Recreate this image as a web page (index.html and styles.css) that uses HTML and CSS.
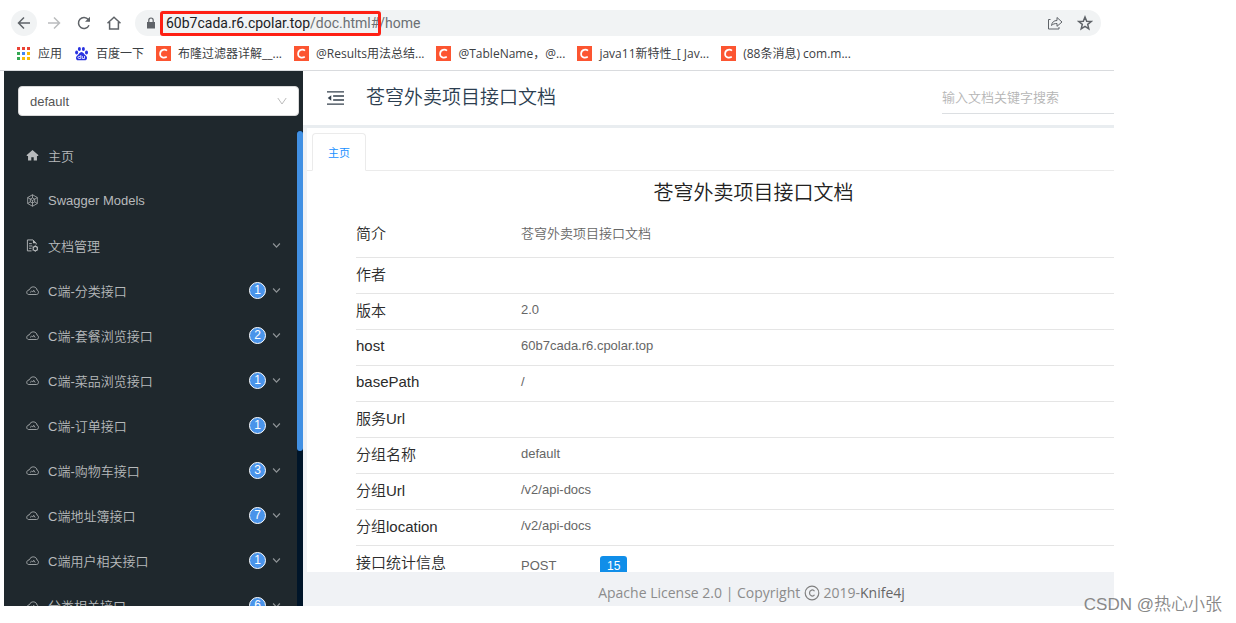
FILE: index.html
```
<!DOCTYPE html>
<html lang="zh-CN">
<head>
    <meta charset="UTF-8">
    <meta name="viewport" content="width=device-width, initial-scale=1.0">
    <title>苍穹外卖项目接口文档</title>
    <link rel="stylesheet" href="styles.css">
</head>
<body>
    <svg class="sprite" aria-hidden="true">
        <symbol id="down" viewBox="0 0 8 8"><path d="M1 2.2l3 3.2 3-3.2" fill="none" stroke="currentColor" stroke-width="1.1"/></symbol>
        <symbol id="cloud" viewBox="0 0 14 14">
            <path d="M2.800 11.300H11.300c2.700-.1 2.700-4.200.6-4.700C11.500 2.300 5 1.700 3.700 6.200.3 6.400-.2 11 2.800 11.300z" fill="none" stroke="currentColor" stroke-width=".9"/>
            <path d="M4.300 9.200l1.800-1.700 1.200 1.200 1-2 1.600 2.500" fill="none" stroke="currentColor" stroke-width=".8"/>
        </symbol>
        <symbol id="csdn" viewBox="0 0 15 15">
            <path d="M0 0h15v15H0z" fill="#fc5531"/>
            <path d="M11 4.600C9.400 3.300 4.400 2.800 4.100 7.600c-.2 4.400 4.200 4.500 6.700 3.100" fill="none" stroke="#fff" stroke-width="1.700"/>
        </symbol>
    </svg>

    <div class="browser">
        <header class="toolbar">
            <button class="nav-btn active" aria-label="后退"><svg viewBox="0 0 16 16"><path d="M14 8H2.500M8 2.500L2.500 8 8 13.500"/></svg></button>
            <button class="nav-btn disabled" aria-label="前进"><svg viewBox="0 0 16 16"><path d="M2 8h11.500M8 2.500L13.500 8 8 13.500"/></svg></button>
            <button class="nav-btn" aria-label="刷新"><svg viewBox="0 0 16 16"><path d="M13 10.200A5.500 5.500 0 1 1 12.300 4.500L13.400 6"/><path d="M14 1.800V6.800H9z" fill="#5f6368" stroke="none"/></svg></button>
            <button class="nav-btn" aria-label="主页"><svg viewBox="0 0 16 16"><path d="M1.500 8.300L8 2.300l6.500 6M3.600 7v7h8.800V7"/></svg></button>
            <div class="address">
                <svg class="lock" viewBox="0 0 10 12"><path d="M1 5h8v6.500H1z" fill="#5f6368"/><path d="M2.800 5V3.200a2.200 2.200 0 0 1 4.400 0V5" fill="none" stroke="#5f6368" stroke-width="1.200"/></svg>
                <span class="url"><b>60b7cada.r6.cpolar.top</b>/doc.html#/home</span>
                <button class="addr-btn share" aria-label="分享"><svg viewBox="0 0 16 16"><path d="M3.500 4.500H1.500v9.500h10.500V12M4.500 10.500c.5-3.500 2.500-5 5.500-5V2.500L15 7l-5 4.300V8.500c-2.500 0-4 .5-5.500 2z"/></svg></button>
                <button class="addr-btn" aria-label="收藏"><svg viewBox="0 0 16 16"><path d="M8 2l1.700 4.200 4.500.3-3.500 2.900 1.100 4.400L8 11.400l-3.800 2.400 1.100-4.400L1.800 6.500l4.500-.3z" stroke-width="1.500"/></svg></button>
                <span class="mark"></span>
            </div>
        </header>

        <nav class="bookmarks">
            <a href="#"><svg viewBox="0 0 15 15"><path d="M1 1h3v3H1zM6 1h3v3H6zM11 1h3v3h-3z" fill="#ea4335"/><path d="M1 6h3v3H1zM1 11h3v3H1z" fill="#34a853"/><path d="M6 6h3v3H6z" fill="#4285f4"/><path d="M11 6h3v3h-3zM6 11h3v3H6zM11 11h3v3h-3z" fill="#fbbc05"/></svg>应用</a>
            <a href="#"><svg viewBox="0 0 15 15" fill="#2932e1"><ellipse cx="2.600" cy="6.600" rx="1.500" ry="2"/><ellipse cx="5.400" cy="3" rx="1.500" ry="2"/><ellipse cx="9.400" cy="3" rx="1.500" ry="2"/><ellipse cx="12.500" cy="6.600" rx="1.500" ry="2"/><path d="M7.500 6C5.500 6 5 8.300 3.300 9.400 1 11.200 2 14.500 4.500 14.300h6c2.600.1 3.500-3 1.200-4.900C10 8.300 9.500 6 7.500 6z"/><path d="M6.800 9v3.500H5c-1.400 0-1.400-2.100 0-2.100h1.500M8.300 10v2.500h2.200V10" fill="none" stroke="#fff" stroke-width=".8"/></svg>百度一下</a>
            <a href="#"><svg><use href="#csdn"/></svg>布隆过滤器详解__...</a>
            <a href="#"><svg><use href="#csdn"/></svg>@Results用法总结...</a>
            <a href="#"><svg><use href="#csdn"/></svg>@TableName，@...</a>
            <a href="#"><svg><use href="#csdn"/></svg>java11新特性_[ Jav...</a>
            <a href="#"><svg><use href="#csdn"/></svg>(88条消息) com.m...</a>
        </nav>

        <div class="app">
            <aside class="sidebar">
                <div class="group">
                    <select aria-label="分组">
                        <option>default</option>
                    </select>
                    <svg viewBox="0 0 10 8"><path d="M.8 1L5 7l4.200-6" fill="none" stroke="#bbb"/></svg>
                </div>
                <div class="menu-wrap">
                    <ul class="menu">
                        <li><a href="#"><svg class="icon" viewBox="0 0 14 14"><path d="M7 1.200L.8 6.500v1h1.400v5h3.500V9h2.600v3.500h3.500v-5h1.400v-1z" fill="currentColor"/></svg>主页</a></li>
                        <li><a href="#"><svg class="icon" viewBox="0 0 14 14"><path d="M7 .8l5.200 3v6.400L7 13.200l-5.200-3V3.800zM7 .8v3.400M1.800 3.800l2.800 1.700M12.200 3.800L9.400 5.500M7 13.200V9.800M1.800 10.200l2.800-1.700M12.200 10.200L9.400 8.500M7 4.200l2.400 1.300v3L7 9.800 4.600 8.500v-3zM4.600 5.500L7 7l2.400-1.500M7 7v2.800" fill="none" stroke="currentColor" stroke-width=".8"/></svg>Swagger Models</a></li>
                        <li><a href="#"><svg class="icon" viewBox="0 0 14 14"><path d="M6 12.800H1.500V1h6L11 4.500V6M3.300 5h3M3.300 7.500h3.500M3.300 10H6" fill="none" stroke="currentColor"/><path d="M7.500 1v3.500H11z" fill="currentColor"/><circle cx="10" cy="10.300" r="2.300" fill="none" stroke="currentColor" stroke-width="1.200"/><path d="M10 6.800v1.200M10 12.600v1.200M7 8.600l1 .6M12 11.400l1 .6M13 8.600l-1 .6M8 11.400l-1 .6" stroke="currentColor"/></svg>文档管理</a><svg class="arrow"><use href="#down"/></svg></li>
                        <li><a href="#"><svg class="icon"><use href="#cloud"/></svg>C端-分类接口</a><span class="badge">1</span><svg class="arrow"><use href="#down"/></svg></li>
                        <li><a href="#"><svg class="icon"><use href="#cloud"/></svg>C端-套餐浏览接口</a><span class="badge">2</span><svg class="arrow"><use href="#down"/></svg></li>
                        <li><a href="#"><svg class="icon"><use href="#cloud"/></svg>C端-菜品浏览接口</a><span class="badge">1</span><svg class="arrow"><use href="#down"/></svg></li>
                        <li><a href="#"><svg class="icon"><use href="#cloud"/></svg>C端-订单接口</a><span class="badge">1</span><svg class="arrow"><use href="#down"/></svg></li>
                        <li><a href="#"><svg class="icon"><use href="#cloud"/></svg>C端-购物车接口</a><span class="badge">3</span><svg class="arrow"><use href="#down"/></svg></li>
                        <li><a href="#"><svg class="icon"><use href="#cloud"/></svg>C端地址簿接口</a><span class="badge">7</span><svg class="arrow"><use href="#down"/></svg></li>
                        <li><a href="#"><svg class="icon"><use href="#cloud"/></svg>C端用户相关接口</a><span class="badge">1</span><svg class="arrow"><use href="#down"/></svg></li>
                        <li><a href="#"><svg class="icon"><use href="#cloud"/></svg>分类相关接口</a><span class="badge">6</span><svg class="arrow"><use href="#down"/></svg></li>
                    </ul>
                    <div class="scrollbar"><div class="thumb"></div></div>
                </div>
            </aside>

            <main class="main">
                <div class="top">
                    <button class="fold" aria-label="收起菜单"><svg viewBox="0 0 18 16"><path d="M0 1.500h18M6.500 5.800H18M6.500 10.200H18M0 14.500h18" stroke="currentColor" stroke-width="1.500"/><path d="M4.500 5v6L.8 8z" fill="currentColor"/></svg></button>
                    <h1>苍穹外卖项目接口文档</h1>
                    <input class="search" type="text" placeholder="输入文档关键字搜索" aria-label="输入文档关键字搜索">
                </div>
                <div class="content">
                    <div class="tabs"><button class="tab">主页</button></div>
                    <h2>苍穹外卖项目接口文档</h2>
                    <table class="info">
                        <tr><th>简介</th><td>苍穹外卖项目接口文档</td></tr>
                        <tr><th>作者</th><td></td></tr>
                        <tr><th>版本</th><td>2.0</td></tr>
                        <tr><th>host</th><td>60b7cada.r6.cpolar.top</td></tr>
                        <tr><th>basePath</th><td>/</td></tr>
                        <tr><th>服务Url</th><td></td></tr>
                        <tr><th>分组名称</th><td>default</td></tr>
                        <tr><th>分组Url</th><td>/v2/api-docs</td></tr>
                        <tr><th>分组location</th><td>/v2/api-docs</td></tr>
                        <tr><th>接口统计信息</th><td><div class="stat"><span>POST</span><span class="tag">15</span></div></td></tr>
                    </table>
                </div>
                <footer class="footer">
                    Apache License 2.0 | Copyright
                    <svg viewBox="0 0 16 16"><circle cx="8" cy="8" r="6.800"/><path d="M10.500 6.200C9.300 4.300 5.500 4.500 5.500 8s3.800 3.700 5 1.800"/></svg>
                    2019-<a href="#">Knife4j</a>
                </footer>
            </main>
        </div>
    </div>
    <div class="watermark">CSDN @热心小张</div>
</body>
</html>
```
FILE: styles.css
```
* {
    box-sizing: border-box;
}

body {
    margin: 0;
    background: #fff;
    font-family: "Liberation Sans", "Noto Sans CJK SC", sans-serif;
    font-size: 13px;
    color: #333;
}

button {
    padding: 0;
    border: none;
    background: none;
    font: inherit;
}

a {
    color: inherit;
    text-decoration: none;
}

.sprite {
    display: none;
}

.browser {
    display: flex;
    flex-direction: column;
    height: 100vh;
    padding-bottom: 17px;
    margin-right: 122px;
}

/* browser toolbar */
.toolbar {
    display: flex;
    align-items: center;
    gap: 4px;
    padding: 10px 13px 0 11px;
}

.nav-btn {
    display: flex;
    align-items: center;
    justify-content: center;
    width: 26px;
    height: 26px;
    border-radius: 50%;
}

.nav-btn.active {
    background: #f1f3f4;
}

.nav-btn svg,
.addr-btn svg {
    display: block;
    width: 16px;
    height: 16px;
    fill: none;
    stroke: #5f6368;
    stroke-width: 1.5;
}

.nav-btn.disabled svg {
    stroke: #babcbe;
}

.address {
    position: relative;
    display: flex;
    flex: 1;
    align-items: center;
    height: 26px;
    margin-left: 4px;
    padding: 0 8px 0 11px;
    border-radius: 13px;
    background: #f1f3f4;
}

.lock {
    width: 10px;
    height: 12px;
}

.url {
    flex: 1;
    margin-left: 10px;
    font-family: Roboto, sans-serif;
    font-size: 14px;
    color: #6b6f73;
}

.url b {
    font-weight: normal;
    color: #202124;
}

.addr-btn {
    margin-left: 14px;
}

.addr-btn.share svg {
    stroke-width: 1;
}

/* red frame around the public address */
.mark {
    position: absolute;
    left: 25px;
    top: 1px;
    width: 221px;
    height: 25px;
    border: 3px solid #fe2014;
    border-radius: 3px;
}

.bookmarks {
    display: flex;
    align-items: center;
    gap: 12px;
    height: 35px;
    padding-left: 16px;
    border-bottom: 1px solid #d9dbde;
    font-family: "Open Sans", "Noto Sans CJK SC", sans-serif;
    font-size: 12px;
    color: #3c4043;
    white-space: nowrap;
}

.bookmarks a {
    display: flex;
    align-items: center;
    gap: 7px;
}

.bookmarks svg {
    width: 15px;
    height: 15px;
}

.app {
    display: flex;
    flex: 1;
    min-height: 0;
    margin-left: 4px;
    overflow: hidden;
}

/* sidebar */
.sidebar {
    display: flex;
    flex-direction: column;
    width: 299px;
    background: #1f282d;
    color: #b7babc;
}

.group {
    position: relative;
    padding: 15px 4px 15px 14px;
}

.group select {
    display: block;
    width: 100%;
    height: 30px;
    padding: 0 11px;
    border: 1px solid #d9d9d9;
    border-radius: 4px;
    background: #fff;
    font: inherit;
    color: #555;
    appearance: none;
}

.group svg {
    position: absolute;
    right: 16px;
    top: 26px;
    width: 10px;
    height: 8px;
}

.menu-wrap {
    display: flex;
    flex: 1;
    min-height: 0;
    overflow: hidden;
}

.menu {
    flex: 1;
    margin: 0;
    padding: 2px 16px 0 22px;
    list-style: none;
    font-weight: 350;
}

.menu li {
    display: flex;
    align-items: center;
    height: 45px;
}

.menu a {
    display: flex;
    flex: 1;
    align-items: center;
    gap: 9px;
}

.icon {
    width: 13px;
    height: 13px;
}

.arrow {
    width: 9px;
    height: 9px;
    color: #8e9396;
}

.badge {
    width: 17px;
    height: 17px;
    margin-right: 6px;
    border: 1px solid #fff;
    border-radius: 50%;
    background: #4a94ea;
    font-size: 12px;
    line-height: 15px;
    text-align: center;
    color: #fff;
}

.scrollbar {
    width: 6px;
    background: #001529;
}

.thumb {
    height: 320px;
    border-radius: 3px;
    background: #4190e3;
}

/* main area keeps its full width and is cut at the window edge */
.main {
    display: flex;
    flex: 1;
    flex-direction: column;
    min-width: 0;
    margin-right: -86px;
    background: #f0f2f5;
}

.top {
    display: flex;
    align-items: center;
    height: 57px;
    padding-left: 24px;
    border-bottom: 3px solid #e9edf0;
    background: #fff;
}

.fold {
    color: #34404c;
}

.fold svg {
    display: block;
    width: 17px;
    height: 16px;
}

.top h1 {
    flex: 1;
    margin: 0 0 0 22px;
    font-size: 19px;
    font-weight: 350;
    line-height: 28px;
    color: #2c3e50;
}

.search {
    width: 258px;
    height: 32px;
    padding: 0;
    border: none;
    border-bottom: 1px solid #dcdfe2;
    font: inherit;
    font-weight: 350;
}

.search::placeholder {
    color: #b5b5b5;
}

.content {
    flex: 1;
    min-height: 0;
    margin-left: 4px;
    padding-top: 5px;
    background: #fff;
    overflow: hidden;
}

.tabs {
    display: flex;
    height: 38px;
    padding-left: 5px;
    border-bottom: 1px solid #ebebeb;
}

.tab {
    width: 54px;
    height: 38px;
    border: 1px solid #ebebeb;
    border-bottom-color: #fff;
    border-radius: 4px 4px 0 0;
    background: #fff;
    font-size: 11px;
    color: #1890ff;
}

.content h2 {
    margin: 7px 0 3px;
    font-size: 20px;
    font-weight: 350;
    line-height: 30px;
    text-align: center;
    color: #222;
}

.info {
    width: 100%;
    padding-left: 49px;
    border-spacing: 0;
}

.info th,
.info td {
    height: 36px;
    padding: 0 0 4px;
    border-bottom: 1px solid #e5e5e5;
    font-weight: 350;
    text-align: left;
    color: #666;
}

.info th {
    width: 165px;
    font-size: 15px;
    color: #2b2b2b;
}

.info tr:first-child th,
.info tr:first-child td {
    height: 47px;
}

.stat {
    display: flex;
    align-items: center;
    padding-top: 8px;
}

.stat span:first-child {
    width: 79px;
}

.tag {
    padding: 0 7px;
    border-radius: 3px;
    background: #108ee9;
    font-size: 12px;
    font-weight: 400;
    line-height: 20px;
    color: #fff;
}

.footer {
    height: 34px;
    padding-top: 6px;
    font-family: "Open Sans", sans-serif;
    font-size: 14px;
    line-height: 30px;
    text-align: center;
    color: #8c8c8c;
}

.footer svg {
    width: 16px;
    height: 16px;
    vertical-align: -3px;
    fill: none;
    stroke: #808080;
    stroke-width: 1.2;
}

.footer a {
    color: #666;
}

.watermark {
    position: absolute;
    right: 14px;
    bottom: 6px;
    font-size: 17px;
    font-weight: 350;
    line-height: 24px;
    color: #888;
}
```
